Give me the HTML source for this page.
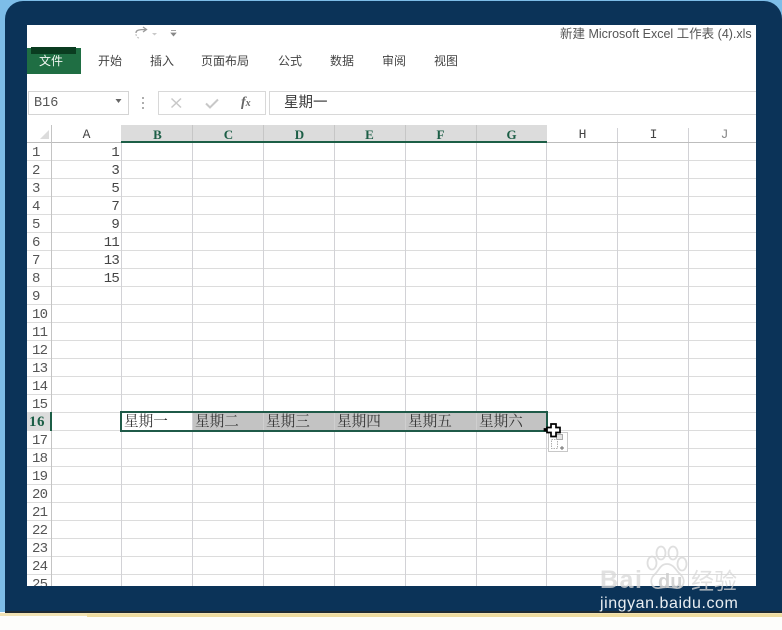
<!DOCTYPE html>
<html>
<head>
<meta charset="utf-8">
<style>
html,body{margin:0;padding:0;background:#fff}
#p{position:relative;width:782px;height:630px;overflow:hidden;background:#fdfdfb;font-family:"Liberation Sans","Noto Sans CJK SC",sans-serif;filter:blur(.3px)}
#p div,#p span{position:absolute;white-space:nowrap}
.a{position:absolute}
#blue{left:0;top:0;width:782px;height:612px;background:#7dbde8}
#navy{left:5px;top:1px;width:777px;height:611px;background:#0b3358;border-radius:18px 18px 0 0}
#dark{left:5px;top:611px;width:777px;height:2px;background:#1f2b33}
#cream{left:0;top:613px;width:782px;height:3px;background:#f2e3b4}
#cream2{left:87px;top:614px;width:695px;height:3px;background:#efdc9f}
#w{left:27px;top:25px;width:729px;height:561px;background:#fff;overflow:hidden}
.r{font-size:12px;color:#444;line-height:16px;top:53px}
.h{font-family:"Liberation Mono","DejaVu Sans Mono",monospace;font-size:13px;color:#444;line-height:16px;text-align:center;top:127px;width:71px}
.hb{font-family:"Liberation Serif",serif;font-weight:bold;color:#1c5e46;font-size:13px}
.n{font-family:"Liberation Mono",monospace;font-size:14px;letter-spacing:-.8px;color:#555;line-height:18px;left:32px;width:20px}
.v{font-family:"Liberation Mono",monospace;font-size:14px;letter-spacing:-.8px;color:#444;line-height:18px;left:60px;width:59px;text-align:right}
.c{font-family:"Noto Serif CJK SC","Liberation Serif",serif;font-size:14.6px;color:#333;line-height:18px;top:412px}
.vl{top:143px;width:1px;height:443px;background:#d2d2d6}
.hl{left:27px;width:729px;height:1px;background:#dcdcdc}
</style>
</head>
<body>
<div id="p">
<div class="a" id="blue"></div>
<div class="a" id="navy"></div>
<div class="a" id="dark"></div>
<div class="a" id="cream"></div>
<div class="a" id="cream2"></div>
<div class="a" id="w"></div>

<!-- grid rows -->
<div class="hl" style="top:142px;background:#bdbdbd"></div>
<div class="hl" style="top:160px"></div><div class="hl" style="top:178px"></div><div class="hl" style="top:196px"></div><div class="hl" style="top:214px"></div>
<div class="hl" style="top:232px"></div><div class="hl" style="top:250px"></div><div class="hl" style="top:268px"></div><div class="hl" style="top:286px"></div>
<div class="hl" style="top:304px"></div><div class="hl" style="top:322px"></div><div class="hl" style="top:340px"></div><div class="hl" style="top:358px"></div>
<div class="hl" style="top:376px"></div><div class="hl" style="top:394px"></div><div class="hl" style="top:412px"></div><div class="hl" style="top:430px"></div>
<div class="hl" style="top:448px"></div><div class="hl" style="top:466px"></div><div class="hl" style="top:484px"></div><div class="hl" style="top:502px"></div>
<div class="hl" style="top:520px"></div><div class="hl" style="top:538px"></div><div class="hl" style="top:556px"></div><div class="hl" style="top:574px"></div>
<!-- grid cols -->
<div class="vl" style="left:51px;top:125px;height:461px;background:#c4c4c4"></div>
<div class="vl" style="left:121px"></div><div class="vl" style="left:192px"></div><div class="vl" style="left:263px"></div><div class="vl" style="left:334px"></div>
<div class="vl" style="left:405px"></div><div class="vl" style="left:476px"></div><div class="vl" style="left:546px"></div><div class="vl" style="left:617px"></div><div class="vl" style="left:688px"></div>
<div class="vl" style="left:617px;top:128px;height:14px"></div><div class="vl" style="left:688px;top:128px;height:14px"></div>

<!-- quick access -->
<svg class="a" style="left:130px;top:24px" width="56" height="18" viewBox="0 0 56 18">
<path d="M6 9 C6 6 9 5.500 16 5.500 M13 3 L16.500 5.500 L13 8" fill="none" stroke="#9a9a9a" stroke-width="1.300"/>
<path d="M6 10 C6 12 7 13.500 9 14" fill="none" stroke="#c4c4c4" stroke-width="1.200" stroke-dasharray="2 1.500"/>
<path d="M22 9 h5 l-2.500 2.500z" fill="#c9c9c9"/>
<path d="M41 6.500 h5 M41 9 h5 l-2.500 3z" fill="#888" stroke="#888" stroke-width=".7"/>
</svg>

<!-- title -->
<div style="left:560px;top:26px;font-size:12.500px;line-height:17px;color:#555;width:196px;overflow:hidden">新建 Microsoft Excel 工作表 (4).xls</div>

<!-- file tab -->
<div style="left:27px;top:48px;width:54px;height:26px;background:#1f6e43"></div>
<div style="left:31px;top:47px;width:45px;height:7px;background:#0a3c20"></div>
<div style="left:39px;top:53px;font-size:12px;line-height:17px;color:#f2f7f2;width:30px">文件</div>

<div class="r" style="left:98px">开始</div>
<div class="r" style="left:150px">插入</div>
<div class="r" style="left:201px">页面布局</div>
<div class="r" style="left:278px">公式</div>
<div class="r" style="left:330px">数据</div>
<div class="r" style="left:382px">审阅</div>
<div class="r" style="left:434px">视图</div>

<!-- formula bar -->
<div style="left:28px;top:91px;width:99px;height:22px;border:1px solid #d4d4d4;background:#fff"></div>
<div style="left:34px;top:96px;font-family:'Liberation Mono',monospace;font-size:13.500px;line-height:16px;color:#555">B16</div>
<svg class="a" style="left:114px;top:97px" width="10" height="8"><path d="M1.500 2 h6 l-3 4z" fill="#666"/></svg>
<svg class="a" style="left:140px;top:95px" width="6" height="16"><path d="M3 2v2M3 7v2M3 12v2" stroke="#999" stroke-width="1.600"/></svg>
<div style="left:158px;top:91px;width:106px;height:22px;border:1px solid #d8d8d8;background:#fff"></div>
<svg class="a" style="left:168px;top:96px" width="90" height="16" viewBox="0 0 90 16">
<path d="M3.500 2.500 L13 11.500 M13 2.500 L3.500 11.500" stroke="#c8c8c8" stroke-width="1.500" fill="none"/>
<path d="M38 7.500 L42 11.500 L50 3.500" stroke="#c8c8c8" stroke-width="2" fill="none"/>
</svg>
<div style="left:241px;top:95px;font-family:'Liberation Serif',serif;font-style:italic;font-weight:bold;font-size:14px;line-height:16px;color:#666">f<span style="position:static;font-size:10px">x</span></div>
<div style="left:269px;top:91px;width:486px;height:22px;border:1px solid #d8d8d8;border-right:0;background:#fff"></div>
<div style="left:284px;top:94px;font-family:'Liberation Sans','Noto Sans CJK SC',sans-serif;font-size:14.500px;line-height:18px;color:#3c3c3c">星期一</div>

<!-- column headers -->
<svg class="a" style="left:38px;top:128px" width="12" height="12"><path d="M2 11 L11 11 L11 2z" fill="#dcdcdc"/></svg>
<div class="a" style="left:121px;top:125px;width:426px;height:17px;background:#dcdcdc"></div>
<div class="a" style="left:192px;top:125px;width:1px;height:17px;background:#c6c6c6"></div>
<div class="a" style="left:263px;top:125px;width:1px;height:17px;background:#c6c6c6"></div>
<div class="a" style="left:334px;top:125px;width:1px;height:17px;background:#c6c6c6"></div>
<div class="a" style="left:405px;top:125px;width:1px;height:17px;background:#c6c6c6"></div>
<div class="a" style="left:476px;top:125px;width:1px;height:17px;background:#c6c6c6"></div>
<div class="a" style="left:121px;top:141px;width:426px;height:2px;background:#1c5e46"></div>
<div class="h" style="left:51px">A</div>
<div class="h hb" style="left:122px">B</div>
<div class="h hb" style="left:193px">C</div>
<div class="h hb" style="left:264px">D</div>
<div class="h hb" style="left:334px">E</div>
<div class="h hb" style="left:405px">F</div>
<div class="h hb" style="left:476px">G</div>
<div class="h" style="left:547px">H</div>
<div class="h" style="left:618px">I</div>
<div class="h" style="left:689px;color:#888">J</div>

<!-- row numbers -->
<div class="n" style="top:144px">1</div><div class="n" style="top:162px">2</div><div class="n" style="top:180px">3</div><div class="n" style="top:198px">4</div>
<div class="n" style="top:216px">5</div><div class="n" style="top:234px">6</div><div class="n" style="top:252px">7</div><div class="n" style="top:270px">8</div>
<div class="n" style="top:288px">9</div><div class="n" style="top:306px">10</div><div class="n" style="top:324px">11</div><div class="n" style="top:342px">12</div>
<div class="n" style="top:360px">13</div><div class="n" style="top:378px">14</div><div class="n" style="top:396px">15</div>
<div class="a" style="left:27px;top:413px;width:24px;height:17px;background:#dcdcdc"></div>
<div class="a" style="left:50px;top:412px;width:2px;height:19px;background:#1c5e46"></div>
<div class="n" style="top:413px;left:29px;font-family:'Liberation Serif',serif;font-weight:bold;font-size:15px;letter-spacing:.5px;color:#1c5e46">16</div>
<div class="n" style="top:432px">17</div><div class="n" style="top:450px">18</div><div class="n" style="top:468px">19</div><div class="n" style="top:486px">20</div>
<div class="n" style="top:504px">21</div><div class="n" style="top:522px">22</div><div class="n" style="top:540px">23</div><div class="n" style="top:558px">24</div>
<div style="left:0;top:574px;width:60px;height:12px;overflow:hidden"><div class="n" style="top:2px;left:32px">25</div></div>

<!-- values -->
<div class="v" style="top:144px">1</div><div class="v" style="top:162px">3</div><div class="v" style="top:180px">5</div><div class="v" style="top:198px">7</div>
<div class="v" style="top:216px">9</div><div class="v" style="top:234px">11</div><div class="v" style="top:252px">13</div><div class="v" style="top:270px">15</div>

<!-- selection -->
<div class="a" style="left:193px;top:413px;width:353px;height:17px;background:#c3c3c3"></div>
<div class="a" style="left:263px;top:413px;width:1px;height:17px;background:#cfcfcf"></div>
<div class="a" style="left:334px;top:413px;width:1px;height:17px;background:#cfcfcf"></div>
<div class="a" style="left:405px;top:413px;width:1px;height:17px;background:#cfcfcf"></div>
<div class="a" style="left:476px;top:413px;width:1px;height:17px;background:#cfcfcf"></div>
<div class="a" style="left:120px;top:411px;width:424px;height:17px;border:2px solid #1f5a48"></div>
<div class="c" style="left:124px">星期一</div>
<div class="c" style="left:195px">星期二</div>
<div class="c" style="left:266px">星期三</div>
<div class="c" style="left:337px">星期四</div>
<div class="c" style="left:408px">星期五</div>
<div class="c" style="left:479px">星期六</div>

<!-- autofill icon + cursor -->
<svg class="a" style="left:543px;top:421px" width="28" height="34" viewBox="0 0 28 34">
<rect x="5.500" y="11.500" width="19" height="19" fill="#fff" stroke="#c8c8c8"/>
<rect x="13.500" y="13.500" width="6" height="5" fill="#e4e4e4" stroke="#999" stroke-width=".8"/>
<rect x="8.500" y="18.500" width="6" height="9" fill="#fff" stroke="#999" stroke-width=".8" stroke-dasharray="1.500 1"/>
<path d="M19 25v4M17 27h4" stroke="#666" stroke-width=".9"/>
<path d="M8 3 h5 v3.500 h4 v5 h-4 v4 h-5 v-4 h-4 v-2 h-2.500 v-1.500 h2.500 v-1.500 h4z" fill="#fff" stroke="#000" stroke-width="1.700"/>
</svg>

<!-- watermark -->
<div style="left:600px;top:565px;font-family:'Liberation Sans',sans-serif;font-weight:bold;font-size:25px;line-height:30px;letter-spacing:1.500px;color:rgba(215,215,215,.75)">Bai</div>
<svg class="a" style="left:643px;top:545px" width="48" height="46" viewBox="0 0 48 46">
<g fill="none" stroke="rgba(215,215,215,.8)" stroke-width="1.800">
<ellipse cx="9" cy="18" rx="4.500" ry="6.500"/>
<ellipse cx="18" cy="8" rx="4.500" ry="6.500"/>
<ellipse cx="30" cy="8" rx="4.500" ry="6.500"/>
<ellipse cx="39" cy="19" rx="4.500" ry="6.500"/>
<path d="M24 19 C17 19 16 26 11 30 C6 35 8 44 16 43 C21 42 28 42 33 43 C41 44 43 35 38 30 C33 26 31 19 24 19z"/>
</g>
</svg>
<div style="left:658px;top:572px;font-family:'Liberation Sans',sans-serif;font-weight:bold;font-size:20px;line-height:20px;color:rgba(205,205,205,.85)">du</div>
<div style="left:691px;top:566px;font-family:'Noto Sans CJK SC',sans-serif;font-size:23px;line-height:26px;color:rgba(215,215,215,.75)">经验</div>
<div style="left:600px;top:594px;font-family:'Liberation Sans',sans-serif;font-size:16px;line-height:19px;letter-spacing:.55px;color:#e9eef2">jingyan.baidu.com</div>
</div>
</body>
</html>
